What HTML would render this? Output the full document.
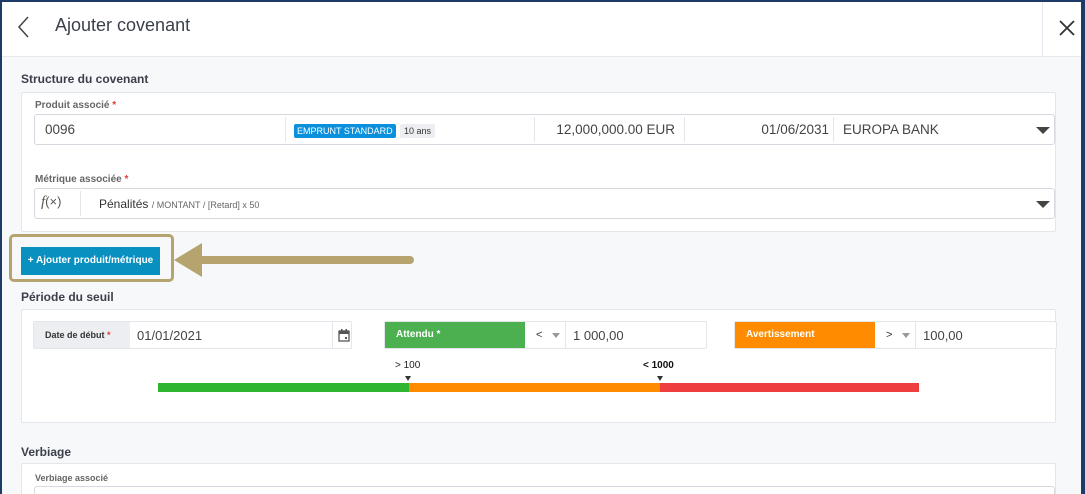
<!DOCTYPE html>
<html><head><meta charset="utf-8"><style>
*{box-sizing:border-box;margin:0;padding:0}
body{width:1085px;height:494px;overflow:hidden;font-family:"Liberation Sans",sans-serif;background:#1e3a66;position:relative}
.a{position:absolute}
#main{position:absolute;left:2px;top:2px;width:1079px;height:492px;background:#f7f8fa;overflow:hidden}
.hdr{left:0;top:0;width:1079px;height:55px;background:#fff;border-bottom:1px solid #e6eaf0}
.t{font-size:12px;font-weight:bold;color:#3a3f4a}
.panel{background:#fff;border:1px solid #e3e6ea;border-radius:2px}
.lbl{font-size:10px;color:#666;font-weight:bold}
.lbl b{color:#e53935}
.inp{background:#fff;border:1px solid #d5d9df;border-radius:3px}
.sep{position:absolute;top:2px;bottom:2px;width:1px;background:#e3e6ea}
.v{font-size:13.5px;color:#444}
.caret{width:0;height:0;border-left:7px solid transparent;border-right:7px solid transparent;border-top:7px solid #444}
.scar{width:0;height:0;border-left:4px solid transparent;border-right:4px solid transparent;border-top:5px solid #999}
</style></head><body>
<div id="main">
<div class="a hdr">
 <svg class="a" style="left:14px;top:13px" width="14" height="24"><path d="M12 2 L3 12 L12 22" stroke="#444" stroke-width="1.5" fill="none"/></svg>
 <div class="a" style="left:53px;top:13px;font-size:18px;color:#3a3f4a">Ajouter covenant</div>
 <div class="a" style="left:1040px;top:0;width:1px;height:55px;background:#e6eaf0"></div>
 <svg class="a" style="left:1057px;top:18px" width="16" height="16"><path d="M1 1L15 15M15 1L1 15" stroke="#333" stroke-width="1.8"/></svg>
</div>
<div class="a t" style="left:19px;top:70px">Structure du covenant</div>
<div class="a panel" style="left:19px;top:90px;width:1035px;height:140px"></div>
<div class="a lbl" style="left:33px;top:98px">Produit associé <b>*</b></div>
<div class="a inp" style="left:32px;top:112px;width:1021px;height:31px">
 <div class="sep" style="left:250px"></div><div class="sep" style="left:499px"></div><div class="sep" style="left:649px"></div><div class="sep" style="left:798px"></div>
 <div class="a v" style="left:10px;top:7px">0096</div>
 <div class="a" style="left:259px;top:9px;background:#0a90dc;color:#fff;font-size:9px;padding:2px 3px;border-radius:2px">EMPRUNT STANDARD</div>
 <div class="a" style="left:365px;top:9px;background:#eceef1;color:#333;font-size:9px;padding:2px 4px;border-radius:2px">10 ans</div>
 <div class="a v" style="left:500px;width:140px;text-align:right;top:7px">12,000,000.00 EUR</div>
 <div class="a v" style="left:650px;width:144px;text-align:right;top:7px">01/06/2031</div>
 <div class="a v" style="left:808px;top:7px">EUROPA BANK</div>
 <div class="a caret" style="left:1001px;top:12px"></div>
</div>
<div class="a lbl" style="left:33px;top:172px">Métrique associée <b>*</b></div>
<div class="a inp" style="left:32px;top:186px;width:1021px;height:31px">
 <div class="sep" style="left:45px"></div>
 <div class="a" style="left:6px;top:5px;font-size:15px;color:#555;font-family:'Liberation Serif',serif;font-style:italic">f<span style="font-style:normal;font-family:'Liberation Sans';font-size:13px">(×)</span></div>
 <div class="a" style="left:64px;top:8px;font-size:12px;color:#333">Pénalités <span style="font-size:9px;color:#666">/ MONTANT / [Retard] x 50</span></div>
 <div class="a caret" style="left:1001px;top:12px"></div>
</div>
<div class="a" style="left:7px;top:232px;width:165px;height:48px;border:3px solid #b5a46e;border-radius:5px"></div>
<div class="a" style="left:19px;top:245px;width:139px;height:28px;background:#0890c0;color:#fff;font-size:10px;font-weight:bold;text-align:center;line-height:28px">+ Ajouter produit/métrique</div>
<svg class="a" style="left:170px;top:238px" width="245" height="42"><path d="M2 20 L30 3 L30 37 Z" fill="#b5a46e"/><line x1="28" y1="20" x2="238" y2="20" stroke="#b5a46e" stroke-width="8" stroke-linecap="round"/></svg>
<div class="a t" style="left:19px;top:288px">Période du seuil</div>
<div class="a panel" style="left:19px;top:307px;width:1035px;height:114px"></div>
<div class="a" style="left:31px;top:319px;width:319px;height:28px;border:1px solid #e3e6ea;border-radius:2px;background:#fff">
 <div class="a" style="left:0;top:0;width:96px;height:26px;background:#eceef1;font-size:9px;font-weight:bold;color:#333;line-height:26px;padding-left:11px">Date de début <b style="color:#e53935">*</b></div>
 <div class="a" style="left:103px;top:6px;font-size:13px;color:#444">01/01/2021</div>
 <div class="sep" style="left:298px;top:0;bottom:0"></div>
 <svg class="a" style="left:304px;top:6px" width="12" height="14"><rect x="1" y="3" width="10" height="10" fill="none" stroke="#555" stroke-width="1.3"/><rect x="1" y="3" width="10" height="3" fill="#555"/><rect x="3" y="1" width="1.5" height="3" fill="#555"/><rect x="7.5" y="1" width="1.5" height="3" fill="#555"/><rect x="7" y="9" width="2" height="2" fill="#555"/></svg>
</div>
<div class="a" style="left:382px;top:319px;width:323px;height:28px;border:1px solid #e3e6ea;border-radius:2px;background:#fff">
 <div class="a" style="left:0;top:0;width:140px;height:26px;background:#4caf50;color:#fff;font-size:10px;font-weight:bold;line-height:26px;padding-left:11px">Attendu *</div>
 <div class="a" style="left:151px;top:7px;font-size:11px;color:#333">&lt;</div><div class="a scar" style="left:167px;top:11px"></div>
 <div class="sep" style="left:180px;top:0;bottom:0"></div>
 <div class="a" style="left:188px;top:6px;font-size:13px;color:#444">1 000,00</div>
</div>
<div class="a" style="left:732px;top:319px;width:323px;height:28px;border:1px solid #e3e6ea;border-radius:2px;background:#fff">
 <div class="a" style="left:0;top:0;width:140px;height:26px;background:#ff8c00;color:#fff;font-size:10px;font-weight:bold;line-height:26px;padding-left:11px">Avertissement</div>
 <div class="a" style="left:151px;top:7px;font-size:11px;color:#333">&gt;</div><div class="a scar" style="left:167px;top:11px"></div>
 <div class="sep" style="left:180px;top:0;bottom:0"></div>
 <div class="a" style="left:188px;top:6px;font-size:13px;color:#444">100,00</div>
</div>
<div class="a" style="left:393px;top:358px;font-size:10px;color:#222">&gt; 100</div>
<div class="a" style="left:641px;top:358px;font-size:10px;color:#111;font-weight:bold">&lt; 1000</div>
<div class="a" style="left:403px;top:374px;width:0;height:0;border-left:3px solid transparent;border-right:3px solid transparent;border-top:5px solid #333"></div>
<div class="a" style="left:655px;top:374px;width:0;height:0;border-left:3px solid transparent;border-right:3px solid transparent;border-top:5px solid #333"></div>
<div class="a" style="left:156px;top:381px;width:251px;height:9px;background:#2fb52f"></div>
<div class="a" style="left:407px;top:381px;width:251px;height:9px;background:#ff8c00"></div>
<div class="a" style="left:658px;top:381px;width:259px;height:9px;background:#ef3e3e"></div>
<div class="a t" style="left:19px;top:443px">Verbiage</div>
<div class="a panel" style="left:19px;top:461px;width:1035px;height:40px"></div>
<div class="a lbl" style="left:33px;top:471px;font-size:9px">Verbiage associé</div>
<div class="a inp" style="left:32px;top:484px;width:1021px;height:20px"></div>
</div>
</body></html>
